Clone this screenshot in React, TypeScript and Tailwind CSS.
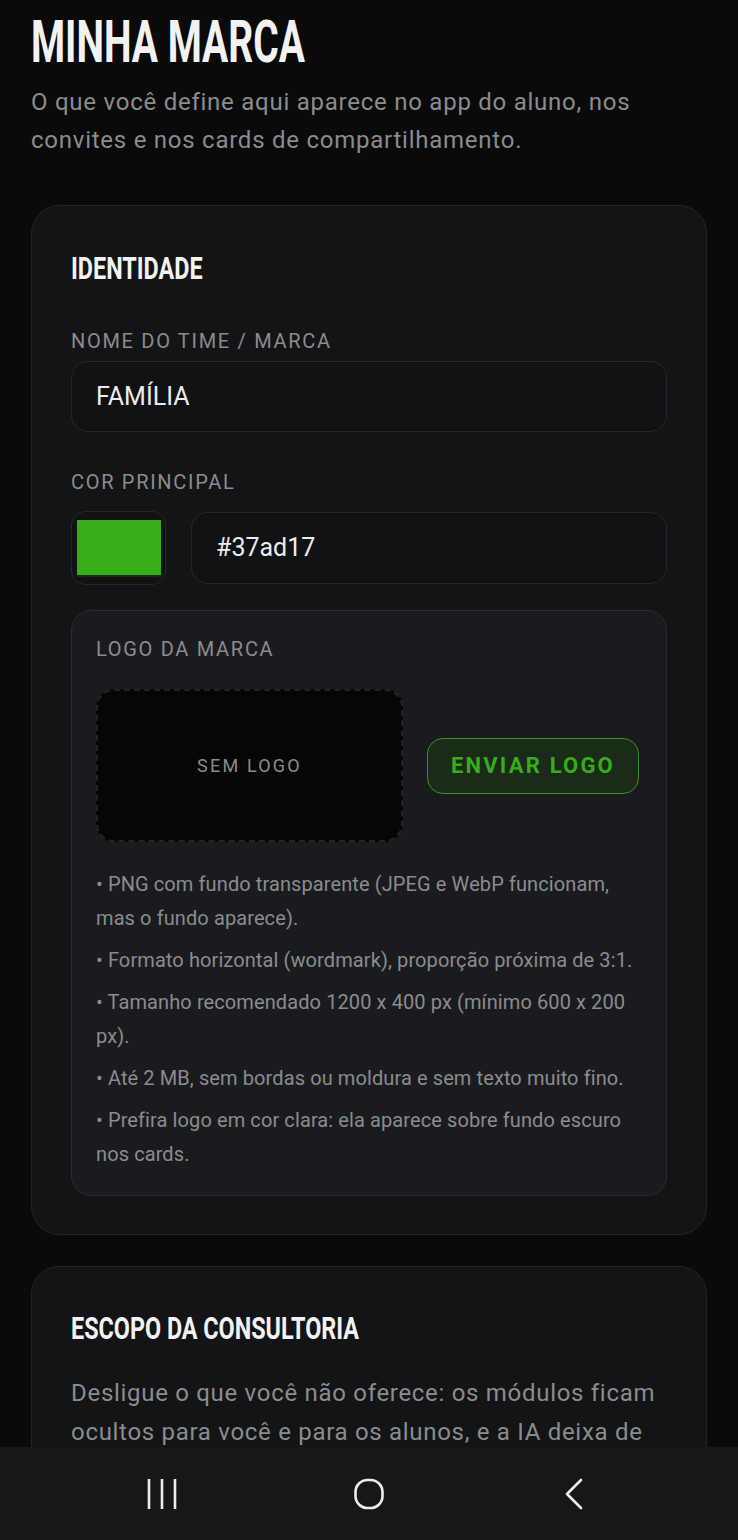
const BODY = "font-['Roboto','Noto_Sans',sans-serif]";

const tips = [
  'PNG com fundo transparente (JPEG e WebP funcionam, mas o fundo aparece).',
  'Formato horizontal (wordmark), proporção próxima de 3:1.',
  'Tamanho recomendado 1200 x 400 px (mínimo 600 x 200 px).',
  'Até 2 MB, sem bordas ou moldura e sem texto muito fino.',
  'Prefira logo em cor clara: ela aparece sobre fundo escuro nos cards.',
];

function Label({ children }: { children: string }) {
  return <p className="text-[20px] tracking-[1.7px] text-[#8b8c8e] leading-none">{children}</p>;
}

// condensed heading: no condensed face installed, so squeeze Roboto Bold
function CardTitle({ children }: { children: string }) {
  return (
    <h2 className="h-[32px] text-[32px] font-bold leading-[32px] text-[#f2f2f2] whitespace-nowrap">
      <span className="inline-block origin-left scale-x-[0.73]">{children}</span>
    </h2>
  );
}

export default function App() {
  return (
    <div className={`min-h-[1540px] bg-[#0a0a0b] ${BODY} px-[31px] pt-[12px] pb-40`}>
      {/* Header */}
      <h1 className="h-[59px] text-[59px] font-bold leading-[59px] text-[#f2f2f2] whitespace-nowrap">
        <span className="inline-block origin-left scale-x-[0.66]">MINHA MARCA</span>
      </h1>
      <p className="mt-[12px] text-[24px] leading-[38px] tracking-[0.75px] text-[#8b8c8e]">
        O que você define aqui aparece no app do aluno, nos convites e nos cards de compartilhamento.
      </p>

      {/* Identidade */}
      <section className="mt-[46px] rounded-[28px] border border-[#222428] bg-[#131416] px-[39px] pt-[46px] pb-[38px]">
        <CardTitle>IDENTIDADE</CardTitle>

        <div className="mt-[47px]">
          <Label>NOME DO TIME / MARCA</Label>
          <div className="mt-[10px] h-[71px] rounded-[16px] border border-[#25272b] bg-[#111214] flex items-center px-6 text-[25px] text-[#ececec]">
            FAMÍLIA
          </div>
        </div>

        <div className="mt-[40px]">
          <Label>COR PRINCIPAL</Label>
          <div className="mt-[19px] flex items-center gap-[25px]">
            <div className="w-[95px] h-[74px] rounded-[14px] border border-[#25272b] bg-[#111214] pl-[5px] pr-[4px] pt-[8px] pb-[7px] flex">
              <div className="flex-1 bg-[#37ad17] border-b-[2px] border-[#1d2a1a]" />
            </div>
            <div className="flex-1 h-[72px] rounded-[16px] border border-[#25272b] bg-[#111214] flex items-center px-6 text-[25px] text-[#ececec]">
              #37ad17
            </div>
          </div>
        </div>

        {/* Logo */}
        <div className="mt-[25px] rounded-[20px] border border-[#2a2c30] bg-[#1a1b1e] px-6 pt-[28px] pb-[24px]">
          <Label>LOGO DA MARCA</Label>
          <div className="mt-[30px] flex items-center gap-[24px]">
            <div className="w-[307px] h-[153px] rounded-[18px] border-2 border-dashed border-[#222326] bg-[#060607] flex items-center justify-center text-[18px] tracking-[2.2px] text-[#8b8c8e]">
              SEM LOGO
            </div>
            <button className="h-[56px] w-[212px] rounded-[16px] border border-[#3d8f28] bg-[#1b2a19] text-[22px] font-bold tracking-[2.2px] text-[#37ad17]">
              ENVIAR LOGO
            </button>
          </div>
          <ul className="mt-[25px] space-y-[8px] text-[20px] leading-[34px] tracking-[0.1px] text-[#8b8c8e]">
            {tips.map((t) => (
              <li key={t}>• {t}</li>
            ))}
          </ul>
        </div>
      </section>

      {/* Escopo */}
      <section className="mt-[31px] rounded-[28px] border border-[#222428] bg-[#131416] px-[39px] pt-[45px] pb-[39px]">
        <CardTitle>ESCOPO DA CONSULTORIA</CardTitle>
        <p className="mt-[30px] text-[24px] leading-[39px] tracking-[0.7px] text-[#8b8c8e]">
          Desligue o que você não oferece: os módulos ficam ocultos para você e para os alunos, e a IA deixa de sugerir esses itens.
        </p>
      </section>

      {/* Android nav bar */}
      <div className="fixed bottom-0 left-0 right-0 h-[93px] bg-[#161719] flex items-center justify-center">
        <div className="w-[207px] flex justify-center">
          <svg width="32" height="32" viewBox="0 0 32 32" fill="none" stroke="#ededed" strokeWidth="2.6">
            <path d="M3 1v30M16 1v30M29 1v30" />
          </svg>
        </div>
        <div className="w-[207px] flex justify-center">
          <svg width="32" height="32" viewBox="0 0 32 32" fill="none" stroke="#ededed" strokeWidth="2.6">
            <rect x="2.5" y="2" width="27" height="28" rx="12" />
          </svg>
        </div>
        <div className="w-[207px] flex justify-center">
          <svg width="32" height="32" viewBox="0 0 32 32" fill="none" stroke="#ededed" strokeWidth="2.6" strokeLinecap="round" strokeLinejoin="round">
            <path d="M21 2L7 16l14 14" />
          </svg>
        </div>
      </div>
    </div>
  );
}
